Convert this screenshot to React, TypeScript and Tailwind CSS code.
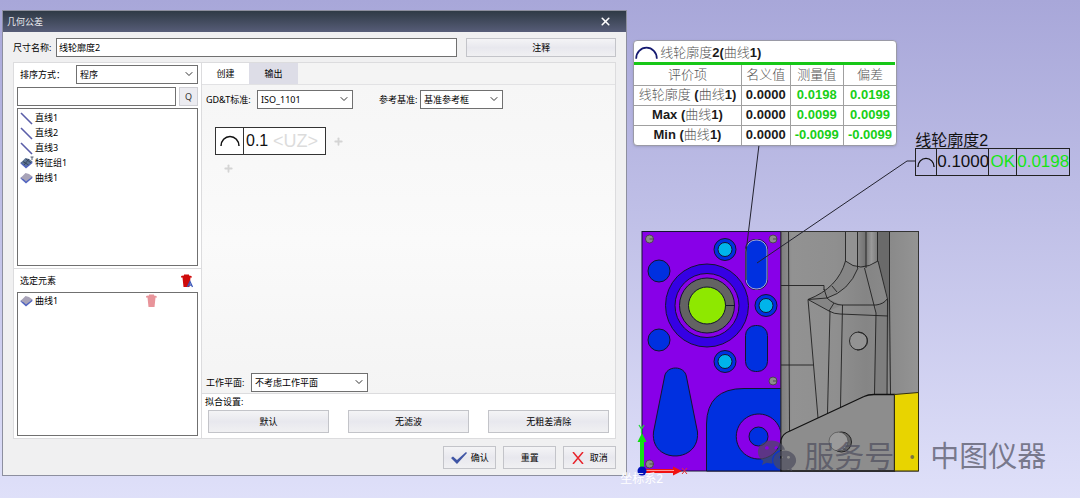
import React from "react";
import { ChevronDown, Plus, X } from "lucide-react";
import { FaWeixin } from "react-icons/fa";
import clsx from "clsx";

const features = [
	{ name: "直线1", kind: "line" },
	{ name: "直线2", kind: "line" },
	{ name: "直线3", kind: "line" },
	{ name: "特征组1", kind: "group" },
	{ name: "曲线1", kind: "curve" },
];

const results = [
	{ pre: "", cjk: "线轮廓度", nominal: "0.0000", measured: "0.0198", dev: "0.0198" },
	{ pre: "Max", cjk: "", nominal: "0.0000", measured: "0.0099", dev: "0.0099" },
	{ pre: "Min", cjk: "", nominal: "0.0000", measured: "-0.0099", dev: "-0.0099" },
];

function FeatureIcon({ kind }: { kind: string }) {
	if (kind === "line") {
		return (
			<svg width="14" height="14" viewBox="0 0 14 14" fill="none">
				<path d="M1 2L12 13" stroke="#5a5ea8" strokeWidth="1.6" />
			</svg>
		);
	}
	const group = kind === "group";
	return (
		<svg width="14" height="14" viewBox="0 0 14 14">
			<path d="M0.500 7.500L6 12.500L12.500 7L12 5L1 6Z" fill="#5064c0" />
			<path
				d="M0.500 7L5.500 2Q9 2 12.500 5.500L6 10.500Q4 7.500 0.500 7Z"
				fill={group ? "#5d7594" : "#a8a3b8"}
			/>
			{group && (
				<path
					d="M3 5.500L8.500 9M6 3L11 7M4 9L9 3M10.500 1H13.500M12 1V4"
					stroke="#2f3b55"
					strokeWidth="0.8"
					fill="none"
				/>
			)}
		</svg>
	);
}

function TrashIcon({ all }: { all?: boolean }) {
	return (
		<svg width="14" height="14" viewBox="0 0 14 14">
			<path
				d="M1 2.500Q1 1.500 4 1.500V.5H9V1.500Q12 1.500 12 3.500H10.500L9.500 13H3.500L2.500 3.500H1Z"
				fill={all ? "#cf0a0a" : "#e8949a"}
			/>
			{all && (
				<path
					d="M7.500 13L10 7.500L12.500 13M8.500 11.200H11.500"
					stroke="#3c57b8"
					strokeWidth="1.3"
					fill="none"
				/>
			)}
		</svg>
	);
}

function ProfileIcon({ className }: { className?: string }) {
	return (
		<svg className={className} viewBox="0 0 20 12" fill="none">
			<path d="M1 11A9 9.500 0 0 1 19 11" stroke="currentColor" strokeWidth="1.5" />
		</svg>
	);
}

function Select({
	id,
	value,
	className,
}: {
	id: string;
	value: string;
	className?: string;
}) {
	return (
		<div className={clsx("relative h-[19px]", className)}>
			<select
				id={id}
				className="h-full w-full appearance-none border border-[#707070] bg-white pl-[3px] pr-4"
			>
				<option>{value}</option>
			</select>
			<ChevronDown
				size={12}
				strokeWidth={2}
				className="pointer-events-none absolute right-[3px] top-[3px] text-[#333]"
			/>
		</div>
	);
}

function PushButton({
	children,
	className,
}: {
	children: React.ReactNode;
	className?: string;
}) {
	return (
		<button
			type="button"
			className={clsx(
				"flex items-center justify-center border border-[#c3c4c9] bg-linear-to-b from-[#f4f4f6] via-[#e8e8ee] to-[#f0f0f2]",
				className,
			)}
		>
			{children}
		</button>
	);
}

function FeaturePanel() {
	return (
		<div className="flex w-[188px] shrink-0 flex-col border-r border-[#dcdcde]">
			<div className="flex flex-col gap-[2px] px-[3px] pt-[2px]">
				<div className="flex items-center justify-between">
					<label htmlFor="sort" className="pl-[3px]">
						排序方式：
					</label>
					<Select id="sort" value="程序" className="w-[122px]" />
				</div>
				<div className="flex gap-[3px] pt-px">
					<input
						aria-label="搜索"
						className="h-[19px] min-w-0 flex-1 border border-[#707070] bg-white px-1"
					/>
					<button
						type="button"
						aria-label="查找"
						className="h-[19px] w-[19px] border border-[#cfcfd4] bg-[#ececf1] text-[#333]"
					>
						Q
					</button>
				</div>
				<ul className="h-[158px] border border-[#707070] bg-white pt-px">
					{features.map((feature) => (
						<li key={feature.name} className="flex h-[15px] items-center gap-px pl-[2px]">
							<FeatureIcon kind={feature.kind} />
							{feature.name}
						</li>
					))}
				</ul>
			</div>
			<div className="mt-[2px] flex flex-1 flex-col border-t border-[#dcdcde] px-[3px] pb-[2px]">
				<div className="flex h-[23px] items-center justify-between pl-[3px] pr-1">
					<span>选定元素</span>
					<button type="button" aria-label="全部删除">
						<TrashIcon all />
					</button>
				</div>
				<ul className="min-h-[144px] flex-1 border border-[#707070] bg-white">
					<li className="flex h-[15px] items-center gap-px pl-[2px] pr-[38px]">
						<FeatureIcon kind="curve" />
						<span className="flex-1">曲线1</span>
						<button type="button" aria-label="删除">
							<TrashIcon />
						</button>
					</li>
				</ul>
			</div>
		</div>
	);
}

function CreatePanel() {
	return (
		<div className="flex min-w-0 flex-1 flex-col">
			<div className="flex h-[22px] border-b border-[#e2e2e4] bg-[#f4f4f4]" role="tablist">
				<button type="button" role="tab" aria-selected="true" className="w-[47px] bg-white">
					创建
				</button>
				<button type="button" role="tab" aria-selected="false" className="w-[49px] bg-[#dddde7]">
					输出
				</button>
			</div>
			<div className="flex flex-1 flex-col bg-linear-to-b from-[#f6f6f6] via-[#fafafa] to-[#f4f4f4]">
				<div className="flex items-center gap-[2px] pl-1 pt-[5px]">
					<label htmlFor="standard" className="w-[49px] whitespace-nowrap">
						GD&amp;T标准:
					</label>
					<Select id="standard" value="ISO_1101" className="w-24" />
					<label htmlFor="datum" className="ml-6 w-[39px] whitespace-nowrap">
						参考基准:
					</label>
					<Select id="datum" value="基准参考框" className="w-[83px]" />
				</div>
				<div className="flex flex-1 flex-col items-start gap-2 px-[13px] pt-[18px]">
					<div className="flex items-center gap-[7px]">
						<div className="flex h-7 w-[111px] border border-[#333] bg-white font-['Liberation_Sans',sans-serif]">
							<span className="flex w-7 items-center justify-center border-r border-[#333]">
								<ProfileIcon className="w-5 text-[#111]" />
							</span>
							<input
								aria-label="公差值"
								defaultValue="0.1"
								className="w-[29px] pl-[2px] text-[16px] text-[#111]"
							/>
							<button type="button" className="text-[18px] text-[#dcdcdc]">
								&lt;UZ&gt;
							</button>
						</div>
						<button type="button" aria-label="添加基准" className="text-[#d4d4d4]">
							<Plus size={11} strokeWidth={4} />
						</button>
					</div>
					<button type="button" aria-label="添加一行" className="ml-2 text-[#d4d4d4]">
						<Plus size={11} strokeWidth={4} />
					</button>
				</div>
				<div className="flex items-center gap-[6px] border-b border-[#dcdcde] pb-px pl-1">
					<label htmlFor="plane" className="w-[39px] whitespace-nowrap">
						工作平面:
					</label>
					<Select id="plane" value="不考虑工作平面" className="w-[117px]" />
				</div>
			</div>
			<div className="bg-white pb-[5px] pl-[6px] pr-[6px]">
				<div className="-ml-[3px] h-4 leading-4">拟合设置:</div>
				<div className="grid grid-cols-3 gap-[19px]">
					<PushButton className="h-[23px]">默认</PushButton>
					<PushButton className="h-[23px]">无滤波</PushButton>
					<PushButton className="h-[23px]">无粗差清除</PushButton>
				</div>
			</div>
		</div>
	);
}

function ToleranceDialog() {
	return (
		<section
			aria-label="几何公差"
			className="mt-[10px] w-[58%] shrink-0 self-start border border-[#8d8f9f] bg-[#f0f0f1] text-[9px] leading-[13px] text-black"
		>
			<header className="flex h-[21px] items-center justify-between bg-linear-to-b from-[#2f3a46] to-[#575d78] pl-1 pr-[14px] text-[#e8e8ee]">
				<h1>几何公差</h1>
				<button type="button" aria-label="关闭" className="text-white">
					<X size={13} strokeWidth={3} />
				</button>
			</header>
			<div className="px-[10px] py-[6px]">
				<div className="flex items-center">
					<label htmlFor="name" className="w-[43px] whitespace-nowrap">
						尺寸名称:
					</label>
					<input
						id="name"
						defaultValue="线轮廓度2"
						className="h-[19px] min-w-0 flex-1 border border-[#707070] bg-white px-[2px]"
					/>
					<PushButton className="ml-[9px] h-[19px] w-[150px]">注释</PushButton>
				</div>
				<div className="mt-[5px] flex border border-[#dcdcde] bg-white">
					<FeaturePanel />
					<CreatePanel />
				</div>
				<footer className="mt-[7px] flex justify-end gap-[7px]">
					<PushButton className="h-[23px] w-[53px] gap-1">
						<svg width="16" height="12" viewBox="0 0 16 12">
							<path d="M0 6L2 4.500L6 8L15 0L16 1L6 12Z" fill="#3f55a5" />
						</svg>
						确认
					</PushButton>
					<PushButton className="h-[23px] w-[53px]">重置</PushButton>
					<PushButton className="h-[23px] w-[53px] gap-[6px]">
						<svg width="12" height="12" viewBox="0 0 12 12">
							<path d="M1 0L11 12M11 0L1 12" stroke="#e8232b" strokeWidth="1.5" />
						</svg>
						取消
					</PushButton>
				</footer>
			</div>
		</section>
	);
}

function Screw({ x, y }: { x: number; y: number }) {
	return (
		<g stroke="#3c3c3c" strokeWidth="0.8">
			<circle cx={x} cy={y} r="4" fill="#8c8c8c" />
			<path d={`M${x} ${y}h4`} />
		</g>
	);
}

function PartDrawing() {
	return (
		<svg
			className="absolute left-0 top-0"
			width="453"
			height="498"
			viewBox="627 0 453 498"
			fill="none"
		>
			<defs>
				<linearGradient id="steel">
					<stop offset="0" stopColor="#7d7d7d" />
					<stop offset="0.08" stopColor="#929292" />
					<stop offset="0.4" stopColor="#8f8f8f" />
					<stop offset="0.62" stopColor="#858585" />
					<stop offset="0.8" stopColor="#8a8a8a" />
					<stop offset="1" stopColor="#949494" />
				</linearGradient>
				<linearGradient id="flute">
					<stop offset="0" stopColor="#8a8a8a" />
					<stop offset="0.4" stopColor="#727272" />
					<stop offset="0.7" stopColor="#999" />
					<stop offset="1" stopColor="#7a7a7a" />
				</linearGradient>
			</defs>

			{/* machined pocket side */}
			<g stroke="#141430" strokeWidth="1">
				<rect x="642" y="231.500" width="139" height="239.500" fill="#8800e8" />
				<circle cx="659" cy="271" r="11" fill="#0030e0" />
				<circle cx="659" cy="340" r="11" fill="#0030e0" />
				<circle cx="707" cy="305.500" r="41.500" fill="#3600e4" />
				<circle cx="707" cy="305.500" r="32" fill="#8800e8" />
				<circle cx="707" cy="305.500" r="27.500" fill="#636363" />
				<circle cx="707" cy="305.500" r="18.500" fill="#8ee800" />
				<path d="M725.500 305.500H735" />
				<circle cx="725" cy="249.500" r="11" fill="#0030e0" />
				<circle cx="725" cy="249.500" r="7" fill="#00b4ea" />
				<circle cx="766" cy="305.500" r="11" fill="#0030e0" />
				<circle cx="766" cy="305.500" r="7" fill="#00b4ea" />
				<circle cx="725" cy="361.500" r="11" fill="#0030e0" />
				<circle cx="725" cy="361.500" r="7" fill="#00b4ea" />
				<rect x="745.500" y="239.500" width="22" height="50" rx="10" fill="#0030e0" />
				<rect x="745.500" y="325.500" width="22" height="46" rx="10" fill="#0030e0" />
				<path
					d="M664.500 377C666 365 685 365 686.500 377L697.500 432C700 464 650 464 653.500 432Z"
					fill="#0030e0"
				/>
				<path d="M706.500 471V424Q707 388.500 744 388.500H781V471Z" fill="#0030e0" />
				<path d="M781 433A22.500 22.500 0 1 0 781 440Z" fill="#8800e8" />
				<circle cx="758.500" cy="436.500" r="9.500" fill="#0030e0" />
			</g>
			<rect x="746" y="240" width="21" height="49" rx="10" stroke="#d0c8e0" strokeWidth="0.8" />
			<Screw x={649.5} y={239} />
			<Screw x={773} y={239} />
			<Screw x={773} y={381} />
			<Screw x={649.5} y={464} />

			{/* bare casting side */}
			<rect x="781" y="231.500" width="137.500" height="239.500" fill="url(#steel)" stroke="#333" />
			<path d="M845.500 232H857.500V268L845.500 261Z" fill="#929292" />
			<path d="M857.500 232H877.500V261Q868 269 857.500 268Z" fill="url(#flute)" />
			<path d="M878 232H889.500V394L888 299L878 261Z" fill="#6a6a6a" />
			<path d="M845 261Q838 288 808 299L829 311L842 305L827 298Q849 291 858 268Z" fill="#858585" />
			<path d="M876 305L888 299V394H874Z" fill="#7e7e7e" />
			<g stroke="#202020" strokeWidth="0.9">
				<path d="M788.500 232L789.500 431M781 285.500H824V290M781 365H813.500" />
				<path d="M845.500 232V261M857.500 232V268M866 232V268M877.500 232V261" />
				<path d="M845.500 261Q860 273 878 261" />
				<path d="M845.500 261Q838 288 808 299.500M858 268Q849 291 827 298L808 299.500" />
				<path d="M824 289L827 298M832 286L837 292" />
				<path d="M827 298Q834 305 842 305H876Q884 304 887 299" />
				<path d="M808 299.500L829 311Q834 314 840 314L888 316M834 303L829 311" />
				<path d="M808 299.500L818 418M830 311L827.500 413M842.500 305L840.500 407" />
				<path d="M878 261L887.500 299L887 394M864.500 268L876 313L874.500 394" />
				<path d="M889.500 232V300L890.500 394" />
				<circle cx="858.500" cy="341" r="9" fill="#939393" />
				<path d="M858 332Q869 334 867 343Q864 350 857 350" />
			</g>
			<path
				d="M781 471V440Q782 434 790 431L864 396.500Q868 394.500 874 394.500H894.500V471Z"
				fill="#8d8d8d"
				stroke="#111"
				strokeWidth="1.3"
			/>
			<circle cx="841.500" cy="442" r="10" fill="#666" stroke="#222" />
			<circle cx="838.500" cy="441.500" r="9.500" fill="#9b9b9b" stroke="#444" strokeWidth="0.6" />
			<path d="M894.500 394.500L918.500 392.500V471H894.500Z" fill="#e8d400" stroke="#332e10" />

			{/* leaders */}
			<path
				d="M759 145L746 252V280M915 161H907L757 263"
				stroke="#22222e"
				strokeWidth="1"
			/>

			{/* axis triad */}
			<path d="M642 470V440" stroke="#16e016" strokeWidth="4" />
			<path d="M637.500 442L642 433L646.500 442Z" fill="#10dc10" />
			<path d="M642 471H675" stroke="#f01212" strokeWidth="4" />
			<path d="M673 466.500L682 471L673 475.500Z" fill="#f01212" />
			<path d="M645 470.500H674" stroke="#ff9a9a" strokeWidth="1" />
			<circle cx="642" cy="471" r="4.500" fill="#0010b8" />
			<path d="M639 425L641.500 429L644 425M641.500 429V433" stroke="#20d838" strokeWidth="1.3" />
			<path d="M682 468L687 474M687 468L682 474" stroke="#e83030" />
		</svg>
	);
}

function Cjk({ children }: { children: React.ReactNode }) {
	return <span className="font-light text-[#555]">{children}</span>;
}

function ResultTable() {
	return (
		<div className="absolute left-[6px] top-10 w-[264px] rounded-sm border border-[#9a9aa6] bg-white font-['Liberation_Sans','Noto_Sans_CJK_SC',sans-serif] text-[13px] font-bold leading-4 text-[#1a1a1a] shadow-sm">
			<div className="mr-px flex h-6 items-center gap-[2px] border-b-3 border-[#17c717] pl-px pt-[3px]">
				<ProfileIcon className="w-[23px] text-[#151a70]" />
				<div className="whitespace-nowrap">
					<Cjk>线轮廓度</Cjk>2(<Cjk>曲线</Cjk>1)
				</div>
			</div>
			<table className="w-full table-fixed border-collapse text-center">
				<colgroup>
					<col className="w-[107px]" />
					<col className="w-[49px]" />
					<col className="w-[53px]" />
					<col className="w-[53px]" />
				</colgroup>
				<thead>
					<tr className="h-5">
						{["评价项", "名义值", "测量值", "偏差"].map((head) => (
							<th
								key={head}
								className="border-b border-r border-[#a0a0a0] p-0 font-light text-[#555] last:border-r-0"
							>
								{head}
							</th>
						))}
					</tr>
				</thead>
				<tbody>
					{results.map((row) => (
						<tr key={row.pre} className="h-5 border-b border-[#a0a0a0] last:border-b-0">
							<td className="whitespace-nowrap border-r border-[#a0a0a0] p-0">
								{row.pre}
								<Cjk>{row.cjk}</Cjk> (<Cjk>曲线</Cjk>1)
							</td>
							<td className="border-r border-[#a0a0a0] p-0">{row.nominal}</td>
							<td className="border-r border-[#a0a0a0] p-0 text-[#17cf17]">{row.measured}</td>
							<td className="p-0 text-[#17cf17]">{row.dev}</td>
						</tr>
					))}
				</tbody>
			</table>
		</div>
	);
}

function Callout() {
	return (
		<div className="absolute left-[288px] top-[134px] font-['Liberation_Sans','Noto_Sans_CJK_SC',sans-serif] text-[17px] text-[#111]">
			<div className="text-[16px] leading-[14px]">线轮廓度2</div>
			<div className="flex h-7 items-center divide-x divide-[#222] border border-[#222] leading-[26px]">
				<span className="flex h-full w-[21px] items-center justify-center">
					<ProfileIcon className="w-[18px]" />
				</span>
				<span className="w-[52px] text-center">0.1000</span>
				<span className="w-7 text-center text-[#14e614]">OK</span>
				<span className="w-[52px] text-center text-[#14e614]">0.0198</span>
			</div>
		</div>
	);
}

function Viewport() {
	return (
		<section aria-label="三维视图" className="relative min-w-0 flex-1">
			<PartDrawing />
			<ResultTable />
			<Callout />
			<span className="absolute -left-[7px] top-[471px] text-[12px] leading-4 text-white">
				坐标系2
			</span>
			<div className="absolute left-[130px] top-[436px] flex items-center gap-[7px] whitespace-nowrap text-[29px] leading-10 text-[#4c4c5c]/70">
				<FaWeixin size={40} />
				<span className="text-[30px]">服务号</span>
				<span className="w-[22px] text-center">·</span>
				<span>中图仪器</span>
			</div>
		</section>
	);
}

export default function App() {
	return (
		<main
			lang="zh-CN"
			className="flex min-h-screen overflow-hidden bg-linear-to-b from-[#a8a7d9] to-[#dfe0f9] pl-[2px] font-['Noto_Sans','Noto_Sans_CJK_SC',sans-serif]"
		>
			<ToleranceDialog />
			<Viewport />
		</main>
	);
}
